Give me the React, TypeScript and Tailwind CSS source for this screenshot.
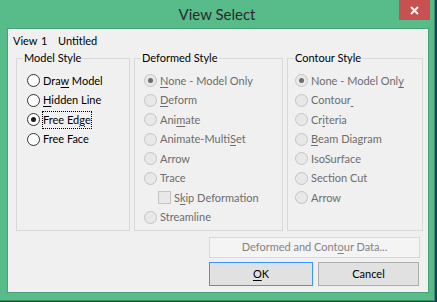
import React from 'react'

type Item = { label: React.ReactNode; checked?: boolean; focus?: boolean; box?: boolean }

const u = (s: string) => <span className="underline underline-offset-[2px]">{s}</span>

const Radio = ({ checked, disabled }: { checked?: boolean; disabled?: boolean }) => (
  <span
    className={
      "w-[13px] h-[13px] rounded-full border flex items-center justify-center shrink-0 " +
      (disabled ? "border-[#c4c4c4] bg-[#e8e8e8]" : "border-[#333333] bg-white")
    }
  >
    {checked && (
      <span className={"w-[5px] h-[5px] rounded-full " + (disabled ? "bg-[#6d6d6d]" : "bg-[#1a1a1a]")} />
    )}
  </span>
)

const Group = ({ title, width, pad, items, disabled }: {
  title: string,
  width: string,
  pad: string,
  items: Item[],
  disabled?: boolean,
}) => (
  <fieldset className={"h-[181px] border border-[#d9d9d9] " + width}>
    <legend className="ml-[6px] px-[1px] leading-[16px] text-black">{title}</legend>
    <div className={"pt-[5px] flex flex-col " + pad}>
      {items.map((it, i) =>
        it.box ? (
          <div key={i} className="h-[19.5px] flex items-center pl-[14px] gap-[3px]">
            <span className="w-[13px] h-[13px] border border-[#c4c4c4] bg-[#e8e8e8] shrink-0" />
            <span className="text-[#6d6d6d]">{it.label}</span>
          </div>
        ) : (
          <div key={i} className="h-[19.5px] flex items-center gap-[3px]">
            <Radio checked={it.checked} disabled={disabled} />
            <span
              className={
                (disabled ? "text-[#6d6d6d] " : "text-black ") +
                (it.focus ? "outline outline-1 outline-dotted outline-black" : "")
              }
            >
              {it.label}
            </span>
          </div>
        )
      )}
    </div>
  </fieldset>
)

export default function App() {
  const model: Item[] = [
    { label: <>Dra{u("w")} Model</> },
    { label: <>{u("H")}idden Line</> },
    { label: <>Free Ed{u("g")}e</>, checked: true, focus: true },
    { label: "Free Face" },
  ]
  const deformed: Item[] = [
    { label: <>{u("N")}one - Model Only</>, checked: true },
    { label: <>{u("D")}eform</> },
    { label: <>Ani{u("m")}ate</> },
    { label: <>Animate-Multi{u("S")}et</> },
    { label: "Arrow" },
    { label: "Trace" },
    { label: <>S{u("k")}ip Deformation</>, box: true },
    { label: "Streamline" },
  ]
  const contour: Item[] = [
    { label: <>None - Model Onl{u("y")}</>, checked: true },
    { label: <>Contour{u("\u00a0")}</> },
    { label: <>Cr{u("i")}teria</> },
    { label: <>{u("B")}eam Diagram</> },
    { label: "IsoSurface" },
    { label: "Section Cut" },
    { label: "Arrow" },
  ]

  return (
    <div className="w-[437px] h-[302px] bg-[#1d3c6e] flex flex-col" style={{ fontFamily: "Lato, 'Liberation Sans', sans-serif" }}>
      <div className="w-[435px] h-[301px] bg-[#58bb8a] border-r border-b border-[#3f8c65] flex flex-col">
        <div className="relative h-[28px] flex items-center justify-center text-[15px] text-[#2a2a2a]">
          <span className="pt-[1px]">View Select</span>
          <div className="absolute right-[4px] top-0 w-[31px] h-[20px] bg-[#c75050] flex items-center justify-center">
            <svg width="9" height="9" viewBox="0 0 9 9">
              <path d="M1 1 L8 8 M8 1 L1 8" stroke="white" strokeWidth="2" />
            </svg>
          </div>
        </div>
        <div className="ml-[7px] w-[422px] h-[265px] border border-[#4aa176] bg-[#f0f0f0] text-[11px] text-black">
          <div className="pl-[5px] pt-[4px] h-[20px] flex leading-[16px]">
            <span className="w-[28px]">View</span>
            <span className="w-[17px]">1</span>
            <span>Untitled</span>
          </div>
          <div className="mt-[1px] pl-[8px] flex gap-[4px]">
            <Group title="Model Style" width="w-[114px]" pad="pl-[10px]" items={model} />
            <Group title="Deformed Style" width="w-[149px]" pad="pl-[9px]" items={deformed} disabled />
            <Group title="Contour Style" width="w-[136px]" pad="pl-[7px]" items={contour} disabled />
          </div>
          <div className="pl-[201px] mt-[6px] flex flex-col gap-[4px]">
            <div className="w-[211px] h-[21px] border border-[#d9d9d9] bg-[#f4f4f4] flex items-center justify-center text-[#838383]">
              <span>Deformed and Cont{u("o")}ur Data...</span>
            </div>
            <div className="flex gap-[5px]">
              <div className="w-[104px] h-[24px] border border-[#3399ff] bg-[#e1e1e1] flex items-center justify-center">
                <span>{u("O")}K</span>
              </div>
              <div className="w-[101px] h-[24px] border border-[#adadad] bg-[#e1e1e1] flex items-center justify-center">
                <span>Cancel</span>
              </div>
            </div>
          </div>
        </div>
      </div>
    </div>
  )
}
